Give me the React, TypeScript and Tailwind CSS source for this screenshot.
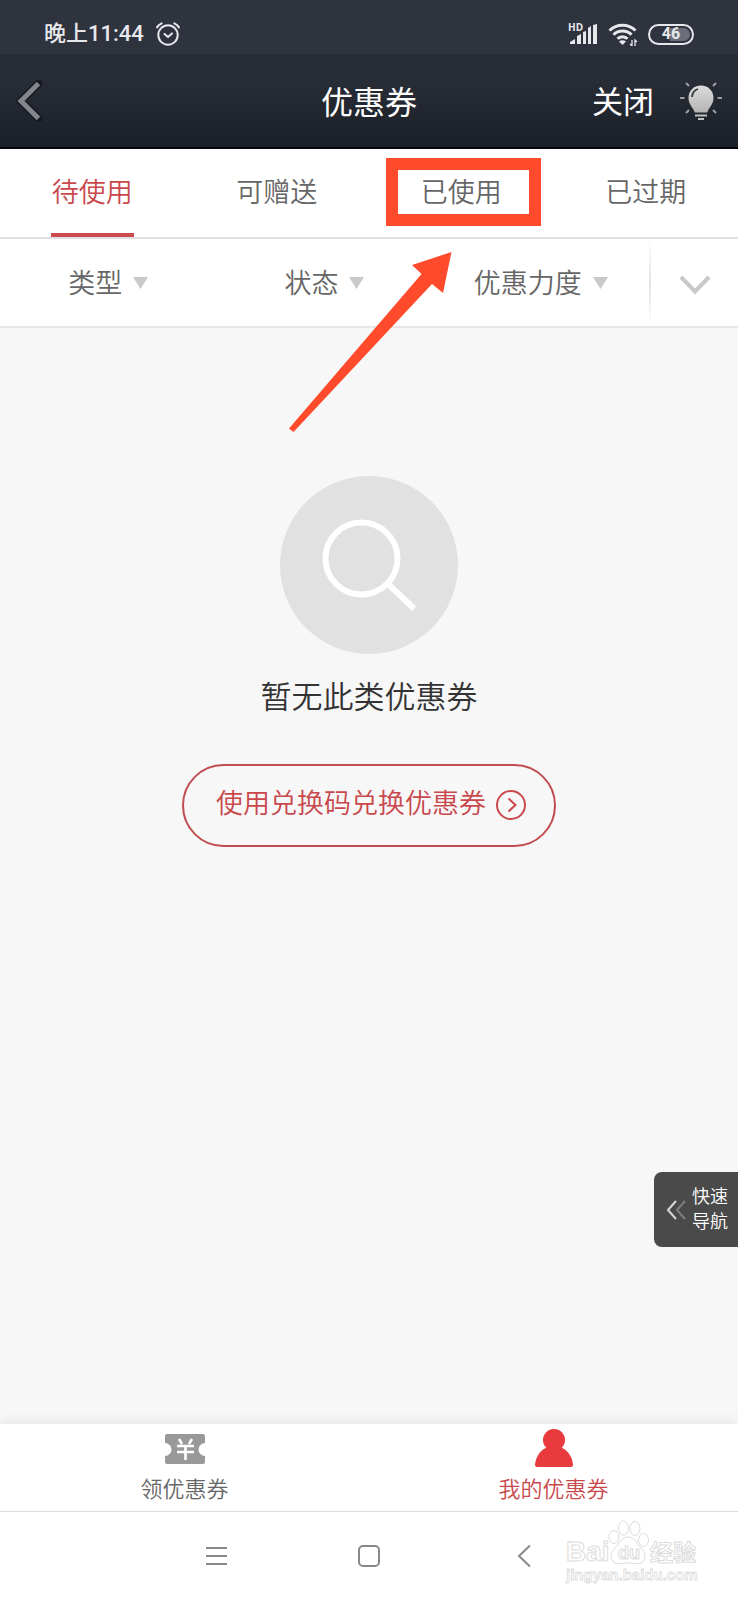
const tabs = ['待使用', '可赠送', '已使用', '已过期'];
const filters = ['类型', '状态', '优惠力度'];

const StatusBar = () => (
  <div className="flex h-[54px] items-center justify-between bg-[#2f333e] pt-[14px] pr-11 pl-11 text-[#e6e8ec]">
    <div className="flex items-center gap-3">
      <span className="text-[22px] leading-6 font-medium">晚上11:44</span>
      <svg className="h-6 w-6" viewBox="0 0 24 24" fill="none" stroke="currentColor" strokeWidth="2" strokeLinecap="round" strokeLinejoin="round">
        <circle cx="12" cy="13" r="9.7" />
        <path d="M1 5.5C2 3.7 3.6 2.3 5.6 1.3M23 5.5C22 3.7 20.4 2.3 18.4 1.3M8.5 12l3.5 3 4-3.5" />
      </svg>
    </div>
    <div className="flex items-center gap-[10px]">
      <svg className="h-8 w-8" viewBox="0 0 32 32" fill="currentColor">
        <text x="2" y="13" fontSize="10" fontWeight="700" fontFamily="Open Sans, sans-serif">HD</text>
        <path d="M4 26v-2l5-3v5zM11 18l4-2v10h-4zM17 14l3-1v13h-3zM22 10l3-2v18h-3zM27 7l4-1v20h-4z" />
      </svg>
      <svg className="h-6 w-[30px]" viewBox="0 0 30 24" fill="none" stroke="currentColor" strokeWidth="3">
        <path d="M1.5 8.5a18.5 18.5 0 0 1 26 0M5.5 12.7a12.7 12.7 0 0 1 18 0M9.5 16.8a7 7 0 0 1 10 0" />
        <path d="M11 19.5q3.500-2.500 7 0l-3.500 3.500z" fill="currentColor" stroke="none" />
        <path d="M24 18v6l-2-2M27 24v-6l2 2" strokeWidth="1.300" />
      </svg>
      <div className="relative flex h-[21px] w-[46px] items-center justify-center rounded-full border-2 border-[#e6e8ec]">
        <span className="absolute top-[2px] right-[2px] h-[13px] w-5 rounded-r-full bg-[#6b6f7a]" />
        <span className="relative text-base leading-none font-bold">46</span>
      </div>
    </div>
  </div>
);

const Header = () => (
  <header className="relative flex h-[95px] items-center justify-between border-b-2 border-[#03060c] bg-linear-to-b from-[#282c35] from-30% to-[#1b2028] px-4 text-white">
    <button aria-label="返回" className="p-0">
      <svg className="h-[42px] w-7" viewBox="0 0 28 42" fill="none" strokeLinejoin="miter">
        <path d="M22.500 3.500L5 21l17.500 17.500" stroke="#161920" strokeWidth="8" strokeLinecap="round" />
        <path d="M22.500 3.500L5 21l17.500 17.500" stroke="#83868c" strokeWidth="5" />
      </svg>
    </button>
    <h1 className="absolute left-1/2 -translate-x-1/2 pt-1 text-[32px] leading-none font-normal">优惠券</h1>
    <div className="flex items-center gap-[26px]">
      <button className="pt-1 text-[31px] leading-none font-normal">关闭</button>
      <button aria-label="提示">
        <svg className="h-10 w-[42px]" viewBox="0 0 42 40">
          <defs>
            <linearGradient id="bulb" x1="0" y1="0" x2="0" y2="1">
              <stop offset="0" stopColor="#dcdcdc" />
              <stop offset="1" stopColor="#b4b4b5" />
            </linearGradient>
          </defs>
          <path d="M21 4.500c-7.500 0-12.500 5.500-12.500 12.500 0 6.500 5 10 6.200 14.500h12.600C28.500 27 33.500 23.500 33.500 17 33.500 10 28.500 4.500 21 4.500z" fill="url(#bulb)" />
          <path d="M12 16c.3-4 2.600-7 6-8" fill="none" stroke="#34373e" strokeWidth="1.800" />
          <path d="M15 34.500h12M18 38h6" stroke="#c0c0c1" strokeWidth="2" />
          <path d="M0 17h4.500M37.500 17H42M6 2l3 3M36 2l-3 3M6 32l3-3M36 32l-3-3" stroke="#9c9ea2" strokeWidth="2" />
        </svg>
      </button>
    </div>
  </header>
);

const Tabs = () => (
  <nav className="grid h-[90px] grid-cols-4 border-b-2 border-[#e0e0e0] bg-white">
    {tabs.map((tab, i) => (
      <div key={tab} className="relative flex justify-center">
        <button
          className={
            i === 0
              ? 'h-[88px] border-b-4 border-[#cb4a4e] px-px pt-1 text-[27px] text-[#c9484c]'
              : 'h-[88px] border-b-4 border-transparent px-px pt-1 text-[27px] text-[#666]'
          }
        >
          {tab}
        </button>
        {/* Highlight frame and pointer */}
        {i === 2 && (
          <>
            <span className="pointer-events-none absolute top-[9px] right-[13px] left-[17px] h-[68px] border-[12px] border-[#ff4b2b]" />
            <svg className="pointer-events-none absolute top-[103px] -left-20 z-10 h-[180px] w-[163px]" viewBox="0 0 163 180" fill="#ff4b2b">
              <path d="M162.500 0L123 13l9.500 9L0 176.500l4.500 3.500L143 32l11 9z" />
            </svg>
          </>
        )}
      </div>
    ))}
  </nav>
);

const Filters = () => (
  <div className="flex h-[89px] border-b-2 border-[#e6e6e6] bg-white">
    <div className="grid flex-1 grid-cols-3">
      {filters.map((filter) => (
        <button key={filter} className="flex items-center justify-center gap-[11px] text-[27px] text-[#666]">
          <span className="pt-1">{filter}</span>
          <svg className="h-3 w-[15px]" viewBox="0 0 15 12" fill="#c9c9c9">
            <path d="M0 0h15L7.500 12z" />
          </svg>
        </button>
      ))}
    </div>
    <span className="w-[2px] bg-linear-to-b from-white via-[#e3e3e3] to-white" />
    <button aria-label="展开" className="flex w-[87px] items-center justify-center pt-1">
      <svg className="h-5 w-8" viewBox="0 0 32 20" fill="none" stroke="#c9c9c9" strokeWidth="4">
        <path d="M2 2l14 14.500L30 2" />
      </svg>
    </button>
  </div>
);

const EmptyState = () => (
  <main className="flex flex-1 flex-col items-center bg-[#f7f7f7] pt-[148px]">
    <svg className="h-[178px] w-[178px]" viewBox="0 0 178 178" fill="none">
      <circle cx="89" cy="89" r="89" fill="#e1e1e1" />
      <circle cx="81.500" cy="82.500" r="36" stroke="#fff" strokeWidth="6" />
      <path d="M108 108l26 24.500" stroke="#fff" strokeWidth="6" />
    </svg>
    <p className="mt-5 text-[31px] leading-[48px] text-[#333]">暂无此类优惠券</p>
    <button className="mt-[42px] flex h-[83px] items-center gap-[10px] rounded-full border-2 border-[#c04d50] pr-7 pb-[2px] pl-8 text-[27px] text-[#c9484c]">
      使用兑换码兑换优惠券
      <svg className="h-[30px] w-[30px]" viewBox="0 0 30 30" fill="none" stroke="#c9484c" strokeWidth="2">
        <circle cx="15" cy="15" r="14" />
        <path d="M12.500 8.500l7 6.500-7 6.500" />
      </svg>
    </button>
  </main>
);

const QuickNav = () => (
  <button className="absolute right-0 bottom-[353px] flex h-[75px] w-[84px] items-center gap-1 rounded-l-lg bg-[#4a4a4a] pb-[2px] pl-3 text-left text-lg leading-[25px] text-white">
    <svg className="h-[22px] w-[22px]" viewBox="0 0 22 22" fill="none" strokeWidth="2">
      <path d="M19 3l-8 9 8 9" stroke="#7e7e7e" />
      <path d="M10 3l-8 9 8 9" stroke="#d8d8d8" />
    </svg>
    <span>
      快速
      <br />
      导航
    </span>
  </button>
);

const BottomTabs = () => (
  <nav className="relative grid h-[88px] grid-cols-2 border-b border-[#dcdcdc] bg-white shadow-[0_-2px_12px_rgba(0,0,0,0.08)]">
    <button className="flex flex-col items-center gap-[7px] pt-[5px] text-[22px] leading-8 text-[#666]">
      <svg className="h-[38px] w-10" viewBox="0 0 40 38">
        <path d="M2 5h36q2 0 2 2v7a6.500 6.500 0 0 0 0 13v6q0 2-2 2H2q-2 0-2-2v-6a6.500 6.500 0 0 0 0-13V7q0-2 2-2z" fill="#999" />
        <path d="M14 10l3 5M27 10l-3 5M12 17h17M12 23h17M20.500 17v14" stroke="#fff" strokeWidth="2.600" />
      </svg>
      领优惠券
    </button>
    <button className="flex flex-col items-center gap-[7px] pt-[5px] text-[22px] leading-8 text-[#c9484c]">
      <svg className="h-[38px] w-10" viewBox="0 0 40 38" fill="#e93b3d">
        <ellipse cx="20" cy="11" rx="11" ry="11" />
        <path d="M1 36C1.500 27 8 19 14 18.500h12C32 19 38.500 27 39 36q0 2-2 2H3q-2 0-2-2z" />
      </svg>
      我的优惠券
    </button>
  </nav>
);

const Watermark = () => (
  <svg className="absolute right-[34px] bottom-3 h-[68px] w-[140px]" viewBox="0 0 140 68" fill="#fff" stroke="#dcdcdc" strokeWidth="1">
    <text x="2" y="41" fontSize="28" fontWeight="700" fontFamily="Liberation Sans, sans-serif">Bai</text>
    <ellipse cx="50" cy="17" rx="5" ry="6.500" />
    <ellipse cx="59.500" cy="8" rx="5" ry="7" />
    <ellipse cx="71" cy="8.500" rx="5" ry="7" />
    <ellipse cx="79.500" cy="20" rx="5" ry="6.500" />
    <path d="M64 17c-7 0-9 7-13 11-4 4-5 8-3 12 3 6 9 3 16 3s13 3 16-3c2-4 1-8-3-12-4-4-6-11-13-11z" />
    <text x="54" y="39" fontSize="18" fontWeight="700" fontFamily="Liberation Sans, sans-serif">du</text>
    <text x="86" y="41" fontSize="23" fontWeight="700" fontFamily="Noto Sans CJK SC, sans-serif">经验</text>
    <text x="2" y="60" fontSize="15" fontWeight="700" strokeWidth="0.800" fontFamily="Liberation Sans, sans-serif">jingyan.baidu.com</text>
  </svg>
);

const SystemNav = () => (
  <div className="relative grid h-[88px] grid-cols-[1fr_84px_1fr] items-center bg-white text-[#888]">
    <button aria-label="菜单" className="justify-self-end pr-[100px]">
      <svg className="h-6 w-[21px]" viewBox="0 0 21 24" stroke="currentColor" strokeWidth="2">
        <path d="M0 4h21M0 12h21M0 20h21" />
      </svg>
    </button>
    <button aria-label="主页" className="justify-self-center">
      <svg className="h-[22px] w-[22px]" viewBox="0 0 22 22" fill="none" stroke="currentColor" strokeWidth="2">
        <rect x="1" y="1" width="20" height="20" rx="4" />
      </svg>
    </button>
    <button aria-label="后退" className="justify-self-start pl-[106px]">
      <svg className="h-6 w-[14px]" viewBox="0 0 14 24" fill="none" stroke="currentColor" strokeWidth="2">
        <path d="M13 1.500L2 12l11 10.500" />
      </svg>
    </button>
    <Watermark />
  </div>
);

const App = () => {
  return (
    <div className="relative flex min-h-screen flex-col bg-[#f7f7f7] font-['Roboto','Noto_Sans_CJK_SC',sans-serif] font-[350]" lang="zh-CN">
      <StatusBar />
      <Header />
      <Tabs />
      <Filters />
      <EmptyState />
      <QuickNav />
      <BottomTabs />
      <SystemNav />
    </div>
  );
};

export default App;
